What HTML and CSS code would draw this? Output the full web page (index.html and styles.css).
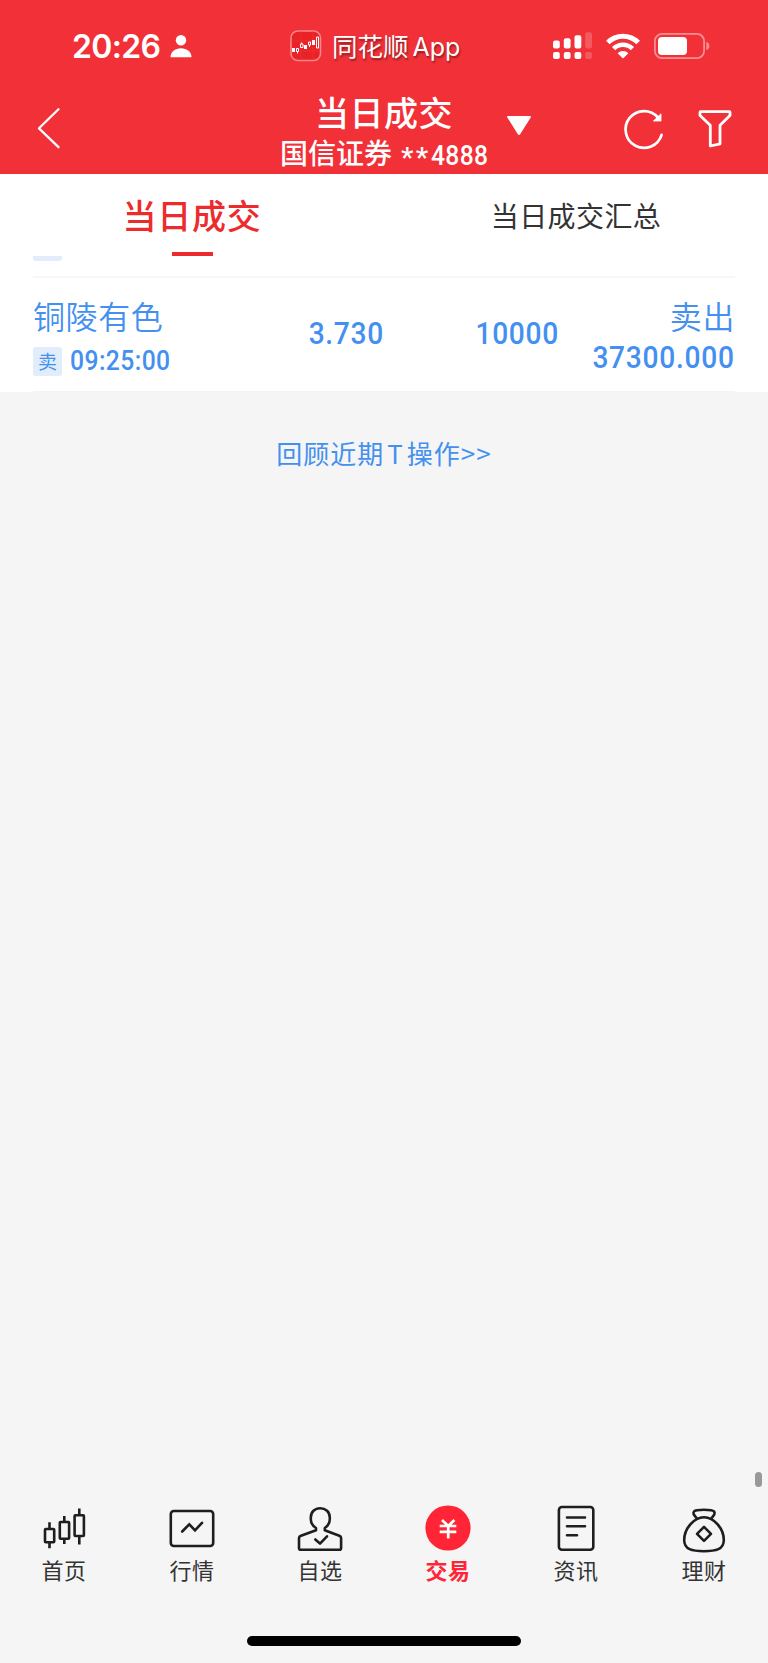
FILE: index.html
```html
<!DOCTYPE html>
<html lang="zh-CN">
<head>
    <meta charset="UTF-8">
    <meta name="viewport" content="width=device-width, initial-scale=1.0">
    <title>当日成交</title>
    <link rel="stylesheet" href="styles.css">
</head>
<body>
    <header class="header">
        <div class="status-bar">
            <div class="status-left">
                <span class="clock">20:26</span>
                <svg class="icon-person" width="22" height="24" viewBox="0 0 22 24" fill="#fff">
                    <circle cx="11" cy="6.2" r="5.2"/>
                    <path d="M0.5 23C0.5 18 5 14.2 11 14.2S21.5 18 21.5 23Q21.5 23.2 21 23.2H1Q0.5 23.2 0.5 23Z"/>
                </svg>
            </div>
            <div class="status-app">
                <svg width="32" height="32" viewBox="0 0 32 32">
                    <rect x="1" y="1" width="29.5" height="29.5" rx="7" fill="#e82226" stroke="#f7868a" stroke-width="1.6"/>
                    <path d="M1 11H30M1 21H30M11 1V30M23 1V30" stroke="#f13a3e" stroke-width="0.5"/>
                    <path d="M2 18h3v4H2zM14 15h3v4h-3zM22 10h3v5h-3z" fill="#fff"/>
                    <path d="M6.5 18.5h2v3h-2zM7.5 21.5v2M10.5 14h2.5v3.5h-2.5zM11.7 12.5v1.5M18.5 12h2v3h-2zM19.5 15v2M26.5 7h2v11h-2z" fill="none" stroke="#fff" stroke-width="1"/>
                </svg>
                <span>同花顺<span class="app-latin">App</span></span>
            </div>
            <div class="status-right">
                <svg width="40" height="28" viewBox="0 0 40 28" fill="#fff">
                    <rect x="0" y="8.5" width="6.8" height="8" rx="2"/>
                    <rect x="10.8" y="6.3" width="6.8" height="10.2" rx="2"/>
                    <rect x="21.5" y="3.3" width="6.8" height="13.2" rx="2"/>
                    <rect x="32.2" y="0.3" width="6.8" height="16.2" rx="2" opacity="0.2"/>
                    <rect x="0" y="20" width="6.8" height="7" rx="2"/>
                    <rect x="10.8" y="20" width="6.8" height="7" rx="2"/>
                    <rect x="21.5" y="20" width="6.8" height="7" rx="2"/>
                    <rect x="32.2" y="20" width="6.8" height="7" rx="2" opacity="0.2"/>
                </svg>
                <svg class="icon-wifi" width="36" height="27" viewBox="0 0 36 27">
                    <path d="M2.8 9.6A21.5 21.5 0 0 1 33.2 9.6" fill="none" stroke="#fff" stroke-width="5"/>
                    <path d="M8.6 15.6A13.3 13.3 0 0 1 27.4 15.6" fill="none" stroke="#fff" stroke-width="4.6"/>
                    <path d="M12.6 20.2A7.7 7.7 0 0 1 23.4 20.2L18.6 25Q18 25.6 17.4 25Z" fill="#fff"/>
                </svg>
                <svg class="icon-battery" width="56" height="26" viewBox="0 0 56 26">
                    <rect x="0.9" y="0.9" width="49.2" height="24.2" rx="7.2" fill="none" stroke="#f88e92" stroke-width="1.8"/>
                    <rect x="4" y="4" width="29" height="18" rx="4" fill="#fff"/>
                    <path d="M52.3 8.8Q55.4 10 55.4 13T52.3 17.2Z" fill="#f88e92"/>
                </svg>
            </div>
        </div>
        <div class="nav-bar">
            <svg class="icon-back" width="24" height="42" viewBox="0 0 24 42">
                <path d="M21.5 2.2L2 21.3L21.5 40.2" fill="none" stroke="#fff" stroke-width="2.3" stroke-linecap="round" stroke-linejoin="round"/>
            </svg>
            <div class="nav-title">
                <h1>当日成交</h1>
                <p>国信证券<span class="stars">**</span><span class="account">4888</span></p>
            </div>
            <svg class="icon-caret" width="26" height="21" viewBox="0 0 26 21">
                <path d="M2 1H24Q25.5 1 24.7 2.5L14.3 19Q13 20.8 11.7 19L1.3 2.5Q0.5 1 2 1Z" fill="#fff"/>
            </svg>
            <div class="nav-actions">
                <svg width="40" height="40" viewBox="0 0 40 40">
                    <path d="M37.6 25.8A18.4 18.4 0 1 1 34 8.5" fill="none" stroke="#fff" stroke-width="2.7" stroke-linecap="round"/>
                    <path d="M37 4.8V12H29.4Z" fill="#fff" stroke="#fff" stroke-width="0.8"/>
                </svg>
                <svg class="icon-filter" width="34" height="38" viewBox="0 0 34 38">
                    <path d="M2.5 1.7H31.5Q32 1.7 32 2.4V5.6L22 15.2V33.8L12.3 36V15.2L2 5.6V2.4Q2 1.7 2.5 1.7Z" fill="none" stroke="#fff" stroke-width="2.8" stroke-linejoin="round"/>
                </svg>
            </div>
        </div>
    </header>

    <nav class="tabs">
        <a class="tab active">当日成交</a>
        <a class="tab">当日成交汇总</a>
    </nav>

    <main>
        <div class="deal-list">
            <div class="deal deal-scrolled"><span class="badge-edge"></span></div>
            <div class="deal">
                <div class="col-name">
                    <div class="stock">铜陵有色</div>
                    <div class="deal-time"><span class="badge">卖</span><span class="time">09:25:00</span></div>
                </div>
                <div class="col-price"><div class="num">3.730</div></div>
                <div class="col-count"><div class="num">10000</div></div>
                <div class="col-amount">
                    <div class="stock">卖出</div>
                    <div class="num">37300.000</div>
                </div>
            </div>
        </div>
        <a class="review-link">回顾近期<span class="latin-t">T</span>操作&gt;&gt;</a>
    </main>

    <div class="scrollbar"></div>

    <footer class="tab-bar">
        <a class="item">
            <svg width="48" height="48" viewBox="0 0 48 48" fill="none" stroke="#1e1e1e" stroke-width="2.6">
                <path d="M9.5 20.3V26M9.5 40.5V46.2M24.3 14V19M24.3 37V42M39.3 6.5V12.5M39.3 34V42.5"/>
                <rect x="5" y="27" width="9.2" height="13.3" rx="0.8"/>
                <rect x="19.8" y="20" width="9.3" height="16.8" rx="0.8"/>
                <rect x="34.6" y="13.3" width="9.3" height="20.7" rx="0.8"/>
            </svg>
            <span>首页</span>
        </a>
        <a class="item">
            <svg width="48" height="48" viewBox="0 0 48 48" fill="none" stroke="#1e1e1e" stroke-width="2.6" stroke-linecap="round">
                <rect x="2.8" y="9" width="42.4" height="35" rx="3"/>
                <path d="M14.2 29.5L21.3 22.3L27 28.4L34 20.8"/>
            </svg>
            <span>行情</span>
        </a>
        <a class="item">
            <svg width="48" height="48" viewBox="0 0 48 48" fill="none" stroke="#1e1e1e" stroke-width="2.6" stroke-linejoin="round" stroke-linecap="round">
                <path d="M20 28.2V26C16.8 24 14.8 21.5 14.8 17V15.5C14.8 10 18.8 6.2 24.2 6.2S33.8 10 33.8 15.5V17C33.8 21.5 31.8 24 28.8 26V28.2L43.3 33.8Q45.1 34.5 45.1 36V46Q45.1 47.8 43.4 47.8H4.6Q3 47.8 3 46V36Q3 34.5 5 33.8Z"/>
                <path d="M19.3 37.5L24 41.6L31 34.3"/>
            </svg>
            <span>自选</span>
        </a>
        <a class="item active">
            <svg width="48" height="48" viewBox="0 0 48 48">
                <circle cx="24" cy="26" r="22.6" fill="#ff2436"/>
                <path d="M18 18L24.2 24L30.4 18M15.7 24H32.3M15.7 29.8H32.3M24.2 24V36.5" fill="none" stroke="#fff" stroke-width="2.7"/>
            </svg>
            <span>交易</span>
        </a>
        <a class="item">
            <svg width="48" height="48" viewBox="0 0 48 48" fill="none" stroke="#1e1e1e" stroke-width="2.6" stroke-linecap="round">
                <rect x="6.9" y="5" width="34.4" height="42.8" rx="3"/>
                <path d="M15 15.5H33M15 24.3H33M15 33.2H25"/>
            </svg>
            <span>资讯</span>
        </a>
        <a class="item">
            <svg width="48" height="48" viewBox="0 0 48 48" fill="none" stroke="#1e1e1e" stroke-width="2.6" stroke-linejoin="round">
                <path d="M17 16.8L13.7 12.4C12.8 9.3 14.5 8.8 17 8.3Q24 7.1 31 8.3C33.8 8.8 35.3 9.6 34.3 12.4L31.2 16.8"/>
                <path d="M24 15.2C34 15.2 43.8 26.5 43.8 38C43.8 47.5 36 49.2 24 49.2S4.2 47.5 4.2 38C4.2 26.5 14 15.2 24 15.2Z"/>
                <path d="M24 24.8L31 31.8L24 38.8L17 31.8Z"/>
            </svg>
            <span>理财</span>
        </a>
    </footer>
    <div class="home-indicator"></div>
</body>
</html>
```
FILE: styles.css
```css
* {
    margin: 0;
    padding: 0;
    box-sizing: border-box;
}

body {
    width: 768px;
    height: 1663px;
    display: flex;
    flex-direction: column;
    position: relative;
    overflow: hidden;
    background-color: #f5f5f5;
    font-family: 'Noto Sans CJK SC', sans-serif;
    color: #333;
}

svg {
    display: block;
    flex-shrink: 0;
    overflow: visible;
}

.header {
    height: 174px;
    background-color: #f23038;
    color: white;
}

.status-bar {
    height: 92px;
    padding: 0 58px 0 72px;
    display: flex;
    align-items: center;
}

.status-left {
    width: 218px;
    display: flex;
    align-items: center;
    gap: 9px;
}

.clock {
    width: 89px;
    padding-top: 1px;
    font: 600 32px/40px Inter, sans-serif;
    letter-spacing: -0.7px;
    white-space: nowrap;
}

.status-app {
    display: flex;
    align-items: center;
    gap: 10px;
    font-size: 25.5px;
    line-height: 32px;
    text-shadow: 1px 2px 2px rgba(0, 0, 0, 0.4);
}

.app-latin {
    margin-left: 4px;
    font-family: Inter, sans-serif;
    font-size: 25px;
}

.status-right {
    margin-left: auto;
    display: flex;
    align-items: center;
}

.icon-wifi {
    margin: 0 13px 0 12px;
}

.icon-battery {
    margin-top: -1px;
}

.nav-bar {
    height: 82px;
    padding: 0 35px 0 37px;
    display: flex;
    align-items: flex-start;
}

.icon-back {
    margin-top: 15px;
}

.nav-title {
    width: 228px;
    margin-left: 209px;
    text-align: center;
    white-space: nowrap;
}

.nav-title h1 {
    font-size: 34px;
    font-weight: 500;
    line-height: 40px;
    letter-spacing: 0.5px;
}

.nav-title p {
    display: flex;
    justify-content: center;
    font-size: 28px;
    font-weight: 500;
    line-height: 41px;
}

.stars {
    margin: 5px 0 0 9px;
    font-family: Roboto, sans-serif;
    letter-spacing: 2.5px;
}

.account {
    font-family: Roboto, sans-serif;
    letter-spacing: 0.4px;
    transform: scaleX(0.88);
    transform-origin: left;
    margin: 3px -8px 0 0;
}

.icon-caret {
    margin: 23px 0 0 8px;
}

.nav-actions {
    margin: 17px 0 0 auto;
    display: flex;
    gap: 35px;
}

.icon-filter {
    margin: 1px 1px 0 -1px;
}

.tabs {
    height: 82px;
    display: flex;
    background-color: white;
}

.tab {
    flex: 1;
    display: flex;
    flex-direction: column;
    align-items: center;
    font-size: 28px;
    line-height: 82px;
    letter-spacing: 0.4px;
}

.tab.active {
    color: #ed2b2d;
    font-size: 34px;
    font-weight: 500;
    line-height: 81px;
    letter-spacing: 0.7px;
}

.tab.active::after {
    content: '';
    width: 41px;
    height: 4px;
    margin-top: -3px;
    background-color: #ed2b2d;
}

.deal-list {
    padding: 0 33px;
    background-color: white;
}

.deal {
    height: 114px;
    display: flex;
    border-bottom: 1px solid #f3f3f3;
    color: #4490f0;
}

.deal-scrolled {
    height: 22px;
    border-bottom: 2px solid #f7f7f7;
}

.badge-edge {
    width: 29px;
    height: 5px;
    background-color: #e1edfb;
    border-radius: 0 0 3px 3px;
}

/* digits are squeezed to get a DIN-like look */
.num {
    font: 500 32px/36px Roboto, sans-serif;
    letter-spacing: 0.8px;
    transform: scaleX(0.88);
    transform-origin: right;
}

.stock {
    font-size: 32px;
    font-weight: 350;
    line-height: 44px;
    letter-spacing: 0.6px;
}

.col-name {
    width: 220px;
    padding-top: 15px;
}

.deal-time {
    display: flex;
    align-items: center;
    gap: 8px;
    margin-top: 10px;
}

.badge {
    width: 29px;
    height: 29px;
    background-color: #e1edfb;
    border-radius: 3px;
    font-size: 19px;
    line-height: 28px;
    text-align: center;
}

.time {
    font: 500 28px/28px Roboto, sans-serif;
    letter-spacing: 0.5px;
    transform: scaleX(0.88);
    transform-origin: left;
    margin-top: -2px;
}

.col-price {
    width: 131px;
    padding-top: 37px;
    text-align: right;
}

.col-count {
    width: 175px;
    padding-top: 37px;
    text-align: right;
}

.col-amount {
    flex: 1;
    padding-top: 15px;
    display: flex;
    flex-direction: column;
    align-items: flex-end;
}

.col-amount .num {
    margin-top: 2px;
}

.review-link {
    display: block;
    margin-top: 43px;
    font-size: 26px;
    line-height: 36px;
    letter-spacing: 1px;
    text-align: center;
    color: #4490f0;
}

.latin-t {
    margin: 0 3px;
}

.scrollbar {
    position: absolute;
    right: 6px;
    top: 1472px;
    width: 7px;
    height: 15px;
    border-radius: 4px;
    background-color: #999;
}

.tab-bar {
    margin-top: auto;
    display: flex;
}

.item {
    flex: 1;
    display: flex;
    flex-direction: column;
    align-items: center;
    font-size: 22px;
    line-height: 32px;
    letter-spacing: 0.6px;
}

.item span {
    margin-top: 3px;
}

.item svg {
    margin-left: -1px;
}

.item.active {
    color: #ff2436;
    font-weight: 700;
}

.home-indicator {
    width: 274px;
    height: 10px;
    margin: 51px auto 17px;
    border-radius: 5px;
    background-color: black;
}
```
